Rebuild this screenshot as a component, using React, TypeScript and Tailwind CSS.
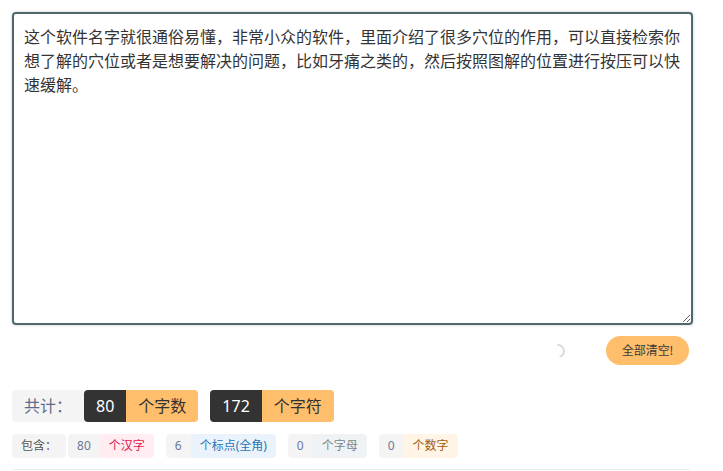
import { useState } from 'react'

const TEXT =
  '这个软件名字就很通俗易懂，非常小众的软件，里面介绍了很多穴位的作用，可以直接检索你想了解的穴位或者是想要解决的问题，比如牙痛之类的，然后按照图解的位置进行按压可以快速缓解。'

function Spinner() {
  return (
    <svg width="14" height="14" viewBox="0 0 14 14" className="block">
      <path d="M7 1 A6 6 0 0 1 9.5 12.4" fill="none" stroke="#dcdcdc" strokeWidth="2" strokeLinecap="round" />
    </svg>
  )
}

function Pair({ num, label, labelCls }: { num: number; label: string; labelCls: string }) {
  return (
    <div className="flex h-6 overflow-hidden rounded text-xs leading-6">
      <span className="bg-[#f4f4f5] px-[9px] text-[#6a7896]">{num}</span>
      <span className={`px-[9px] ${labelCls}`}>{label}</span>
    </div>
  )
}

export default function App() {
  const [text, setText] = useState(TEXT)

  const han = (text.match(/[\u4e00-\u9fa5]/g) || []).length
  const punct = (text.match(/[\uff0c\u3002\uff1f\uff01\uff1a\uff1b\u3001\u201c\u201d]/g) || []).length
  const letters = (text.match(/[a-zA-Z]/g) || []).length
  const digits = (text.match(/[0-9]/g) || []).length
  const words = han + letters + digits
  const chars = new TextEncoder().encode(text).length - han - punct

  return (
    <div className="min-h-[471px] bg-white font-['Noto_Sans','Noto_Sans_CJK_SC',sans-serif]">
      <div className="ml-3 flex w-[681px] flex-col pt-3">
        <textarea
          value={text}
          onChange={e => setText(e.target.value)}
          className="h-[313px] w-full rounded border-2 border-[#50676e] px-[10px] py-[10px] font-['Noto_Sans_CJK_SC',sans-serif] text-base leading-6 text-[#333] shadow-[0_0_3px_rgba(80,103,110,0.35)] outline-none"
        />

        <div className="mt-[11px] flex items-center justify-end pr-1">
          <Spinner />
          <button
            onClick={() => setText('')}
            className="ml-[41px] h-[29px] rounded-full bg-[#ffbe6b] px-4 text-xs text-[#3a3a3a]"
          >
            全部清空!
          </button>
        </div>

        <div className="mt-[25px] flex h-8 items-center text-base leading-8">
          <span className="rounded-l bg-[#f4f4f5] px-3 text-[#5d6b8a]">共计：</span>
          <div className="flex overflow-hidden rounded">
            <span className="bg-[#333] px-3 text-white">{words}</span>
            <span className="bg-[#ffbe6b] px-3 text-[#333]">个字数</span>
          </div>
          <div className="ml-3 flex overflow-hidden rounded">
            <span className="bg-[#333] px-3 text-white">{chars}</span>
            <span className="bg-[#ffbe6b] px-3 text-[#333]">个字符</span>
          </div>
        </div>

        <div className="mt-3 flex items-center gap-3">
          <div className="flex gap-[2px]">
            <span className="h-6 rounded bg-[#f4f4f5] px-[9px] text-xs leading-6 text-[#555]">包含：</span>
            <Pair num={han} label="个汉字" labelCls="bg-[#ffedf2] text-[#e0194f]" />
          </div>
          <Pair num={punct} label="个标点(全角)" labelCls="bg-[#eaf3fc] text-[#2a75b3]" />
          <Pair num={letters} label="个字母" labelCls="bg-[#eff3f5] text-[#74878f]" />
          <Pair num={digits} label="个数字" labelCls="bg-[#fff4e6] text-[#a3600b]" />
        </div>

        <div className="mt-[11px] w-[678px] border-t border-[#eeeeee]" />
      </div>
    </div>
  )
}
